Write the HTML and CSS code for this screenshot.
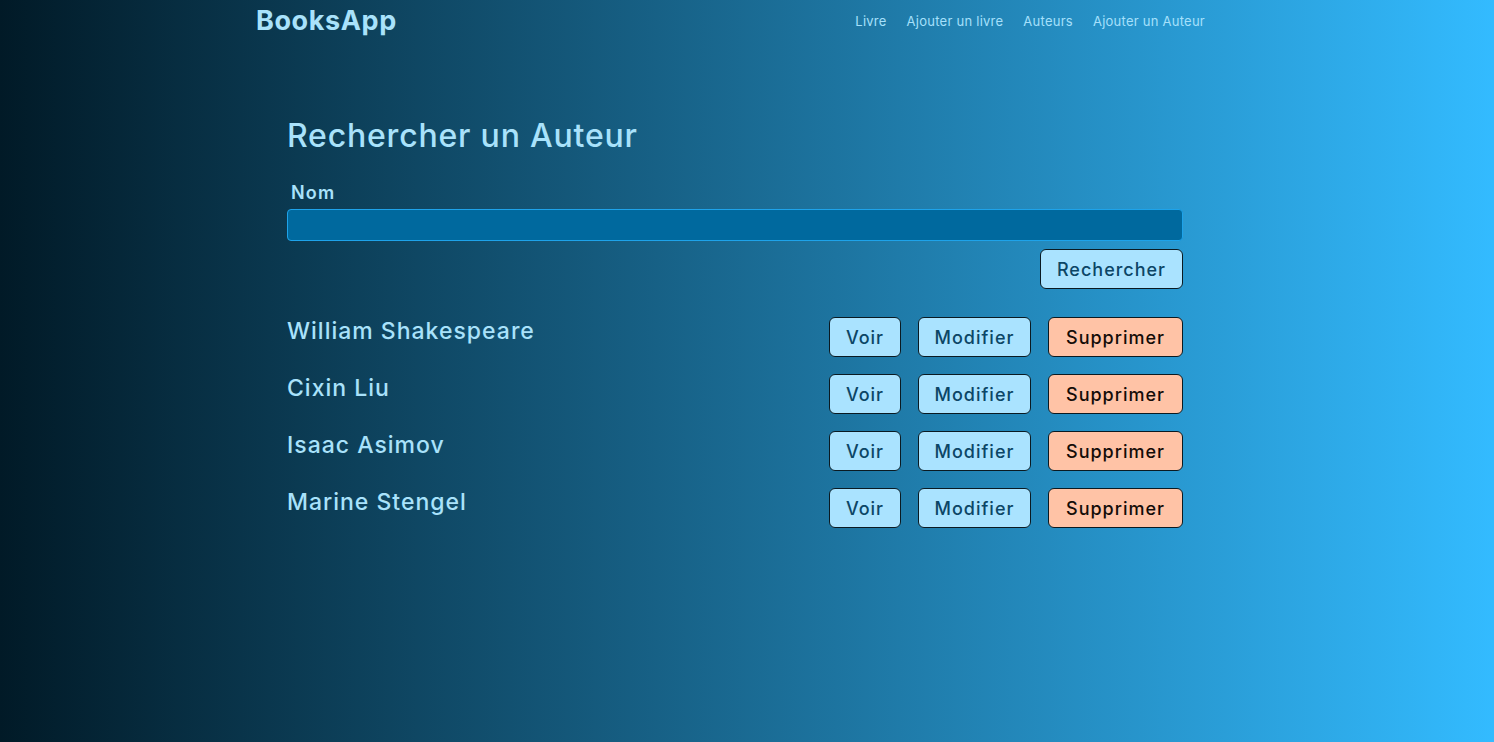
FILE: index.html
```html
<!DOCTYPE html>
<html lang="fr">
<head>
<meta charset="utf-8">
<title>BooksApp</title>
<link rel="stylesheet" href="styles.css">
</head>
<body>
<div class="container">
  <header class="navbar">
    <a class="brand" href="#">BooksApp</a>
    <nav class="nav">
      <a href="#">Livre</a>
      <a href="#">Ajouter un livre</a>
      <a href="#">Auteurs</a>
      <a href="#">Ajouter un Auteur</a>
    </nav>
  </header>
  <main class="main">
    <h1 class="title">Rechercher un Auteur</h1>
    <form class="search">
      <label class="label" for="nom">Nom</label>
      <input class="input" id="nom" type="text">
      <div class="search-actions">
        <button type="button" class="btn btn-blue btn-search">Rechercher</button>
      </div>
    </form>
    <ul class="list">
      <li class="row">
        <span class="name">William Shakespeare</span>
        <div class="actions">
          <button class="btn btn-blue btn-voir">Voir</button>
          <button class="btn btn-blue btn-mod">Modifier</button>
          <button class="btn btn-peach btn-sup">Supprimer</button>
        </div>
      </li>
      <li class="row">
        <span class="name">Cixin Liu</span>
        <div class="actions">
          <button class="btn btn-blue btn-voir">Voir</button>
          <button class="btn btn-blue btn-mod">Modifier</button>
          <button class="btn btn-peach btn-sup">Supprimer</button>
        </div>
      </li>
      <li class="row">
        <span class="name">Isaac Asimov</span>
        <div class="actions">
          <button class="btn btn-blue btn-voir">Voir</button>
          <button class="btn btn-blue btn-mod">Modifier</button>
          <button class="btn btn-peach btn-sup">Supprimer</button>
        </div>
      </li>
      <li class="row">
        <span class="name">Marine Stengel</span>
        <div class="actions">
          <button class="btn btn-blue btn-voir">Voir</button>
          <button class="btn btn-blue btn-mod">Modifier</button>
          <button class="btn btn-peach btn-sup">Supprimer</button>
        </div>
      </li>
    </ul>
  </main>
</div>
</body>
</html>
```
FILE: styles.css
```css
* { box-sizing: border-box; }
html, body { margin: 0; padding: 0; }
body {
  min-height: 100vh;
  background: linear-gradient(to right, #011a27, #33bbff);
  font-family: Inter, "DejaVu Sans", sans-serif;
  color: #a9e2fb;
}
.container {
  width: 982px;
  margin: 0 auto;
}
.navbar {
  height: 42px;
  display: flex;
  align-items: center;
  justify-content: space-between;
  padding-right: 33px;
}
.brand {
  font-size: 27px;
  font-weight: 700;
  letter-spacing: 0.6px;
  color: #a9e2fb;
  text-decoration: none;
  line-height: 42px;
}
.nav {
  display: flex;
  gap: 20px;
}
.nav a {
  color: #a6e0fb;
  font-size: 13px;
  letter-spacing: 0.25px;
  text-decoration: none;
}
.main {
  width: 896px;
  margin-left: 31px;
  padding-top: 74px;
}
.title {
  margin: 0;
  font-size: 32px;
  line-height: 40px;
  font-weight: 500;
  letter-spacing: 0.8px;
  color: #a9e2fb;
}
.search {
  margin-top: 26px;
}
.label {
  display: block;
  padding-left: 4px;
  font-size: 18px;
  line-height: 22px;
  font-weight: 600;
  letter-spacing: 1.2px;
  margin-bottom: 5px;
}
.input {
  display: block;
  width: 100%;
  height: 32px;
  background: #00699e;
  border: 1px solid #1ea3ea;
  border-radius: 4px;
  color: #fff;
  font-family: inherit;
}
.search-actions {
  display: flex;
  justify-content: flex-end;
  margin-top: 8px;
}
.btn {
  height: 40px;
  border: 1px solid #0a1a22;
  border-radius: 6px;
  font-family: inherit;
  font-size: 18px;
  font-weight: 500;
  letter-spacing: 1px;
  padding: 0;
  cursor: pointer;
}
.btn-blue {
  background: #aae3ff;
  color: #0c4666;
}
.btn-peach {
  background: #ffc3a6;
  color: #140c08;
}
.btn-search { width: 143px; }
.btn-voir { width: 72px; }
.btn-mod { width: 113px; }
.btn-sup { width: 135px; }
.list {
  list-style: none;
  margin: 28px 0 0;
  padding: 0;
  display: flex;
  flex-direction: column;
  gap: 17px;
}
.row {
  display: flex;
  justify-content: space-between;
  align-items: flex-start;
}
.name {
  font-size: 23px;
  line-height: 28px;
  font-weight: 500;
  letter-spacing: 1px;
  color: #a9e2fb;
}
.actions {
  display: flex;
  gap: 17px;
}
```
